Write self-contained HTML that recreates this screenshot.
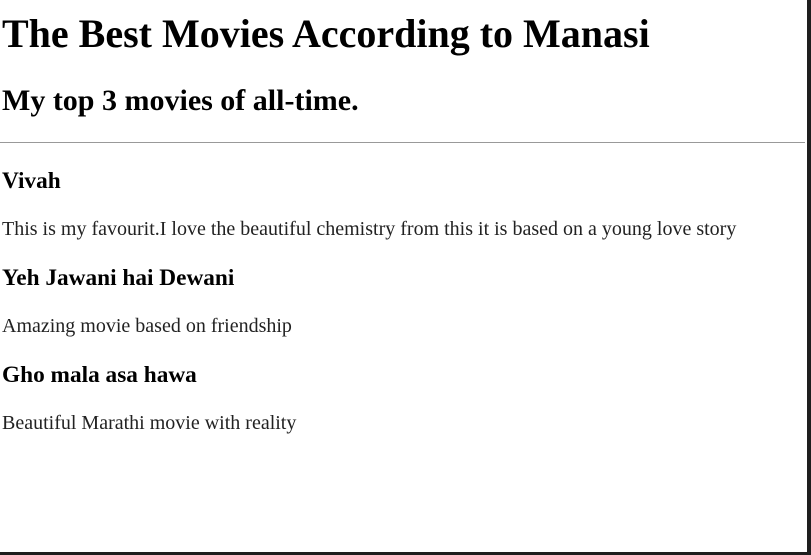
<!DOCTYPE html>
<html><head><style>
html,body{margin:0;padding:0;background:#1e1e1e;}
#page{position:absolute;left:0;top:0;width:807px;height:552px;background:#fff;font-family:"Liberation Serif",serif;color:#000;overflow:hidden}
#page div{position:absolute;left:2px;line-height:1;white-space:nowrap}
.h1{font-size:40px;font-weight:bold}
.h2{font-size:30px;font-weight:bold}
.h3{font-size:23.3px;font-weight:bold}
.p{font-size:20px;color:#222}
hr{position:absolute;left:0;top:142px;width:805px;margin:0;border:0;border-top:1px solid #999;height:0}
</style></head><body><div id="page">
<div class="h1" style="top:14px">The Best Movies According to Manasi</div>
<div class="h2" style="top:86px">My top 3 movies of all-time.</div>
<hr>
<div class="h3" style="top:170px">Vivah</div>
<div class="p" style="top:219px">This is my favourit.I love the beautiful chemistry from this it is based on a young love story</div>
<div class="h3" style="top:267px">Yeh Jawani hai Dewani</div>
<div class="p" style="top:316px">Amazing movie based on friendship</div>
<div class="h3" style="top:364px">Gho mala asa hawa</div>
<div class="p" style="top:413px">Beautiful Marathi movie with reality</div>
</div></body></html>
